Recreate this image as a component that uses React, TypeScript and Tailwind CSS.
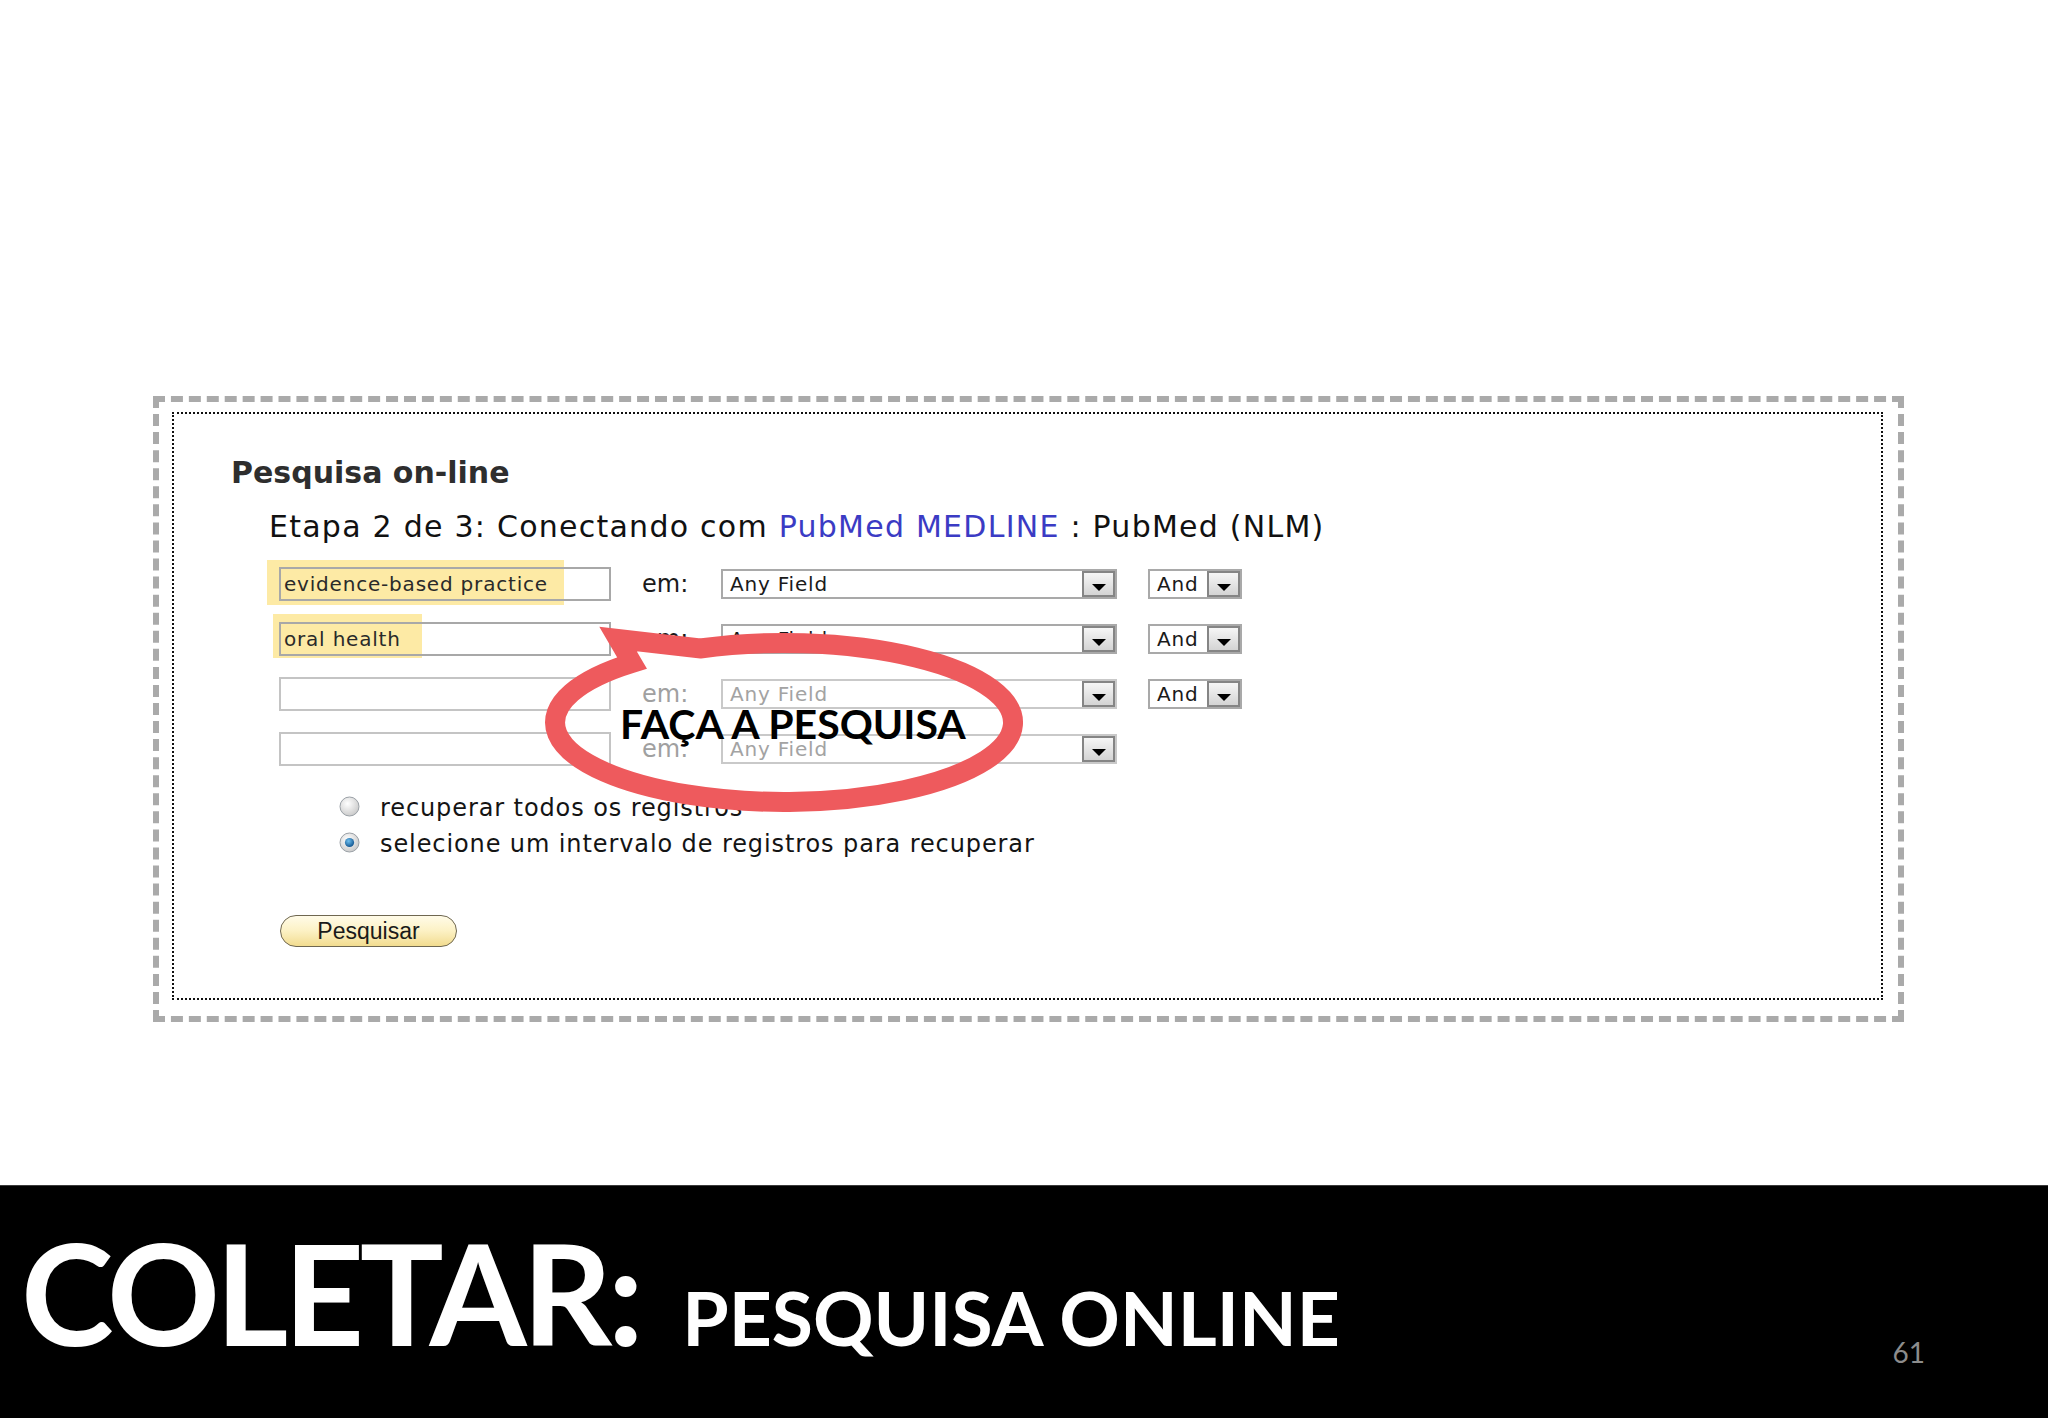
import React from 'react'

const rows = [
  { text: 'evidence-based practice', active: true, and: true, hl: 'left-[-12px] top-[-7px] w-[297px] h-[45px]' },
  { text: 'oral health', active: true, and: true, hl: 'left-[-6px] top-[-8px] w-[149px] h-[44px]' },
  { text: '', active: false, and: true, hl: '' },
  { text: '', active: false, and: false, hl: '' },
]

function Arrow() {
  return (
    <span className="flex h-full w-[33px] items-end justify-center border-2 border-[#858585] bg-gradient-to-b from-[#f6f6f6] to-[#d4d4d4] pb-[3px]">
      <svg width="14" height="8" viewBox="0 0 14 8">
        <polygon points="0,0 14,0 7,7" fill="#000" />
      </svg>
    </span>
  )
}

function Select({ label, width, muted }: { label: string; width: string; muted?: boolean }) {
  return (
    <div className={`flex h-[30px] ${width} border-2 ${muted ? 'border-[#c9c9c9]' : 'border-[#a9a9a9]'} bg-white`}>
      <span className={`flex-1 pl-[7px] text-[20px] leading-[26px] tracking-[0.8px] ${muted ? 'text-[#a3a3a3]' : 'text-[#1a1a1a]'}`}>{label}</span>
      <Arrow />
    </div>
  )
}

function Radio({ checked }: { checked?: boolean }) {
  return (
    <svg width="21" height="21" viewBox="0 0 21 21">
      <defs>
        <radialGradient id={checked ? 'rc' : 'ru'} cx="40%" cy="35%" r="70%">
          <stop offset="0%" stopColor="#ffffff" />
          <stop offset="100%" stopColor="#c8c8c8" />
        </radialGradient>
        <radialGradient id="dot" cx="40%" cy="35%" r="70%">
          <stop offset="0%" stopColor="#6fc0f0" />
          <stop offset="100%" stopColor="#0d4f8a" />
        </radialGradient>
      </defs>
      <circle cx="10.5" cy="10.5" r="9.5" fill={checked ? 'url(#rc)' : 'url(#ru)'} stroke="#9aa0a6" strokeWidth="1" />
      {checked && <circle cx="10.5" cy="10.5" r="4.6" fill="url(#dot)" />}
    </svg>
  )
}

export default function App() {
  return (
    <div className="relative flex h-[1418px] w-[2048px] flex-col overflow-hidden bg-white">
      <div className="ml-[153px] mt-[396px] h-[626px] w-[1751px] border-[6px] border-dashed border-[#aaaaaa] pb-[16px] pl-[13px] pr-[15px] pt-[10px]">
        <div className="h-full border-2 border-dotted border-[#111111] pt-[41px] font-['DejaVu_Sans',sans-serif]">
          <h1 className="pl-[57px] text-[30px] font-bold leading-[36px] text-[#2e2e2e]">
            Pesquisa on-line
          </h1>
          <p className="mt-[18px] pl-[95px] text-[30px] leading-[36px] tracking-[1.25px] text-[#111111]">
            Etapa 2 de 3: Conectando com <span className="text-[#3b3bc4]">PubMed MEDLINE</span> : PubMed (NLM)
          </p>

          <div className="mt-[22px] flex flex-col gap-[21px] pl-[105px]">
            {rows.map((r, i) => (
              <div key={i} className="flex h-[34px] items-center">
                <div className="relative h-[34px] w-[332px]">
                  {r.hl && <div className={`absolute ${r.hl} bg-[#fbd54b]/50`} />}
                  <div className={`relative h-full w-full border-2 ${r.active ? 'border-[#a8a8a8]' : 'border-[#c4c4c4]'} bg-transparent pl-[3px] text-[20px] leading-[30px] tracking-[0.8px] text-[#2a2a2a]`}>
                    {r.text}
                  </div>
                </div>
                <span className={`ml-[31px] w-[79px] text-[24px] leading-[30px] ${r.active ? 'text-[#1a1a1a]' : 'text-[#a0a0a0]'}`}>em:</span>
                <Select label="Any Field" width="w-[396px]" muted={!r.active} />
                {r.and && (
                  <div className="ml-[31px]">
                    <Select label="And" width="w-[94px]" />
                  </div>
                )}
              </div>
            ))}
          </div>

          <div className="mt-[22px] flex flex-col pl-[165px] text-[24px] tracking-[0.9px] text-[#141414]">
            <label className="flex h-[36px] items-center gap-[20px]">
              <Radio />
              <span className="pt-[3px]">recuperar todos os registros</span>
            </label>
            <label className="flex h-[36px] items-center gap-[20px]">
              <Radio checked />
              <span className="pt-[3px]">selecione um intervalo de registros para recuperar</span>
            </label>
          </div>

          <button className="ml-[106px] mt-[55px] h-[32px] w-[177px] rounded-full border-[1.5px] border-[#6f6750] bg-gradient-to-b from-[#fffbe8] via-[#fcf1c4] to-[#f2dc8f] font-['Liberation_Sans',Arial,sans-serif] text-[23px] leading-[28px] text-[#1a1a1a]">
            Pesquisar
          </button>
        </div>
      </div>

      <div className="mt-auto flex h-[233px] items-end border-t border-[#3a3a3a] bg-black font-['Lato',sans-serif] font-bold text-white">
        <div className="flex items-baseline pb-[56px] pl-[21px]">
          <span className="text-[140px] leading-[140px] tracking-[-4.5px]">COLETAR:</span>
          <span className="ml-[43px] text-[75px] leading-[75px]">PESQUISA ONLINE</span>
        </div>
        <span className="ml-auto pb-[52px] pr-[123px] text-[28px] font-normal leading-[28px] text-[#8c8c8c]">61</span>
      </div>

      <svg className="pointer-events-none absolute left-0 top-0" width="2048" height="1418" viewBox="0 0 2048 1418">
        <path
          d="M 632 663 L 618 639 L 700 648.5 A 229 79.5 0 1 1 632 663 Z"
          fill="none"
          stroke="#ee5a5d"
          strokeWidth="20"
          strokeLinejoin="miter"
          strokeMiterlimit="10"
        />
      </svg>
      <div className="absolute left-[620px] top-[703px] font-['Lato',sans-serif] text-[41px] font-bold leading-[41px] text-black">
        FAÇA A PESQUISA
      </div>
    </div>
  )
}
